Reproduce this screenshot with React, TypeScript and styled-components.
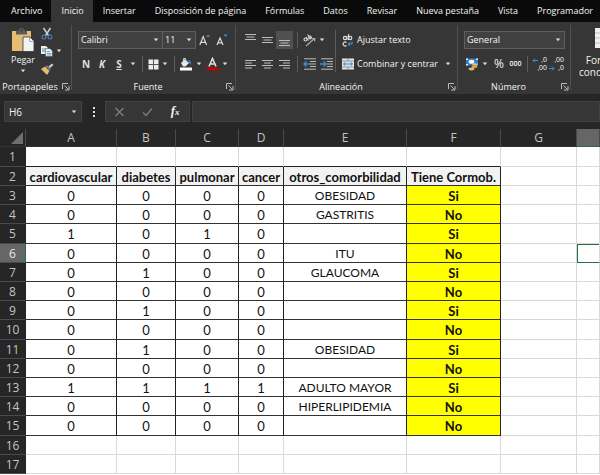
import React from "react";
import styled, { createGlobalStyle, css } from "styled-components";

const UI = '"Open Sans", "Noto Sans", sans-serif';
const SHEET = 'Lato, "Noto Sans", sans-serif';

const Global = createGlobalStyle`
  *, *::before, *::after { box-sizing: border-box; }
  body { margin: 0; background: #262626; font-family: ${UI}; overflow: hidden; }
  button, input, select { font: inherit; color: inherit; }
  button { border: 0; padding: 0; background: none; cursor: pointer; }
  svg { display: block; flex: none; }
`;

const Window = styled.div`
  display: flex;
  flex-direction: column;
  height: 100vh;
  overflow: hidden;
  color: #f4f4f4;
  font-size: 10px;
  line-height: 14px;
`;

/* ---------- ribbon tabs ---------- */

const TabBar = styled.nav`
  display: flex;
  flex: none;
  height: 22px;
  padding-left: 1px;
  background: #0a0a0a;
`;

const Tab = styled.button<{ $active?: boolean }>`
  flex: none;
  padding: 0 9px 0 10px;
  font-size: 9px;
  white-space: nowrap;
  background: ${(p) => (p.$active ? "#363636" : "transparent")};
`;

/* ---------- ribbon ---------- */

const Ribbon = styled.div`
  display: flex;
  flex: none;
  height: 72px;
  background: #363636;
  overflow: hidden;
`;

const Group = styled.section<{ $width: number }>`
  display: flex;
  flex-direction: column;
  flex: none;
  width: ${(p) => p.$width}px;
  padding: 6px 6px 0;
  position: relative;
  &::after {
    content: "";
    position: absolute;
    right: 0;
    top: 3px;
    bottom: 4px;
    width: 1px;
    background: #505050;
  }
`;

const GroupBody = styled.div`
  display: flex;
  flex: 1;
  min-height: 0;
`;

const GroupFooter = styled.div`
  display: flex;
  flex: none;
  align-items: center;
  height: 14px;
  margin: 0 -6px;
`;

const GroupLabel = styled.span`
  flex: 1;
  text-align: center;
  font-size: 9px;
`;

const Rows = styled.div`
  display: flex;
  flex-direction: column;
  gap: 4px;
  padding-top: 2px;
`;

const Row = styled.div`
  display: flex;
  align-items: center;
  height: 20px;
`;

const ToolButton = styled.button<{ $width: number; $active?: boolean }>`
  display: flex;
  align-items: center;
  justify-content: center;
  flex: none;
  width: ${(p) => p.$width}px;
  height: 18px;
  background: ${(p) => (p.$active ? "#505050" : "transparent")};
`;

const Glyph = styled.span<{ $style?: "bold" | "italic" | "underline" }>`
  font-weight: 700;
  color: #dedede;
  ${(p) => p.$style === "italic" && css`font-style: italic;`}
  ${(p) => p.$style === "underline" && css`text-decoration: underline;`}
`;

const Divider = styled.span<{ $width?: number }>`
  display: flex;
  flex: none;
  justify-content: center;
  width: ${(p) => p.$width ?? 8}px;
  height: 16px;
  &::before {
    content: "";
    width: 1px;
    background: #5c5c5c;
  }
`;

const TallDivider = styled.span`
  flex: none;
  width: 1px;
  height: 42px;
  margin: 2px 6px 0 0;
  background: #5c5c5c;
`;

const PickerFrame = styled.label<{ $width: number }>`
  display: flex;
  align-items: center;
  flex: none;
  position: relative;
  width: ${(p) => p.$width}px;
  height: 18px;
  border: 1px solid #5e5e5e;
  background: #414141;
  & + & { border-left: 0; }
  svg { position: absolute; right: 3px; pointer-events: none; }
`;

const PickerSelect = styled.select`
  appearance: none;
  width: 100%;
  height: 16px;
  padding: 0 12px 0 2px;
  border: 0;
  outline: 0;
  background: transparent;
  font-size: 9px;
`;

const LabelButton = styled.button`
  display: flex;
  align-items: center;
  gap: 3px;
  height: 20px;
  font-size: 9px;
  white-space: nowrap;
  svg:last-child:not(:first-child) { margin-left: 4px; }
`;

const PasteButton = styled.button`
  display: flex;
  flex-direction: column;
  align-items: center;
  width: 34px;
  font-size: 9px;
  span { margin: 1px 0 2px; }
`;

const ClipColumn = styled.div`
  display: flex;
  flex-direction: column;
  align-items: flex-start;
  margin-top: -4px;
`;

const ClipRow = styled.div`
  display: flex;
`;

const BigButton = styled.button`
  display: flex;
  flex-direction: column;
  align-items: center;
  flex: none;
  align-self: flex-start;
  padding: 6px 8px 0;
  font-size: 10px;
  line-height: 12px;
  span { margin-top: 6px; }
`;

/* ---------- formula bar ---------- */

const FormulaBar = styled.div`
  display: flex;
  flex: none;
  align-items: center;
  height: 35px;
  padding-left: 4px;
`;

const NameBox = styled.div`
  display: flex;
  align-items: center;
  width: 78px;
  height: 21px;
  border: 1px solid #414141;
  background: #363636;
`;

const NameInput = styled.input`
  flex: 1;
  min-width: 0;
  padding: 0 0 0 4px;
  border: 0;
  outline: 0;
  background: transparent;
`;

const FxGroup = styled.div`
  display: flex;
  align-items: center;
  justify-content: space-around;
  width: 85px;
  height: 21px;
  margin-right: 2px;
  border: 1px solid #414141;
  background: #363636;
`;

const FormulaInput = styled.input`
  flex: 1;
  min-width: 0;
  height: 21px;
  border: 1px solid #414141;
  outline: 0;
  background: #363636;
`;

/* ---------- sheet ---------- */

const SheetArea = styled.main`
  flex: 1;
  min-height: 0;
  overflow: hidden;
  background: #fff;
`;

const Sheet = styled.table`
  width: 100%;
  table-layout: fixed;
  border-collapse: separate;
  border-spacing: 0;
  font-family: ${SHEET};
  font-size: 12px;
  line-height: 16px;
  color: #111;
  th, td { padding: 1px 0 0; overflow: hidden; white-space: nowrap; text-align: center; }
`;

const Col = styled.col<{ $width?: number }>`
  width: ${(p) => (p.$width ? `${p.$width}px` : "auto")};
`;

const BodyRow = styled.tr`
  height: 19px;
  &:first-child, &:nth-child(5n) { height: 20px; }
`;

const ColumnHead = styled.th<{ $selected?: boolean }>`
  height: 18px;
  border-right: 1px solid #4a4a4a;
  border-bottom: 1px solid ${(p) => (p.$selected ? "#217346" : "#333")};
  background: ${(p) => (p.$selected ? "#666" : "#262626")};
  color: #c4c4c4;
  font-family: ${UI};
  font-size: 12px;
  font-weight: 400;
`;

const Corner = styled(ColumnHead)`
  svg { margin: 0 2px 0 auto; }
`;

const RowHead = styled.th<{ $selected?: boolean }>`
  border-bottom: 1px solid #4a4a4a;
  border-right: 1px solid ${(p) => (p.$selected ? "#217346" : "#262626")};
  background: ${(p) => (p.$selected ? "#666" : "#262626")};
  color: ${(p) => (p.$selected ? "#e6e6e6" : "#c4c4c4")};
  font-family: ${UI};
  font-size: 12px;
  font-weight: 400;
`;

type CellKind = "blank" | "above" | "title" | "number" | "value" | "flag" | "selected";

const Cell = styled.td<{ $kind: CellKind }>`
  border-right: 1px solid #d9d9d9;
  border-bottom: 1px solid #d9d9d9;
  ${(p) => p.$kind === "above" && css`border-bottom-color: #222;`}
  ${(p) =>
    ["title", "number", "value", "flag"].includes(p.$kind) &&
    css`border-right-color: #222; border-bottom-color: #333;`}
  ${(p) => p.$kind === "title" && css`background: #f2f2f2; font-size: 13px; font-weight: 700;`}
  ${(p) => p.$kind === "number" && css`font-size: 13px;`}
  ${(p) => p.$kind === "flag" && css`background: #ff0; font-size: 13px; font-weight: 700;`}
  ${(p) => p.$kind === "selected" && css`box-shadow: inset 1px 1px #217346; border-bottom-color: #217346;`}
`;

/* ---------- icons ---------- */

const Chevron = () => (
  <svg width="6" height="4" viewBox="0 0 6 4"><path d="M.8.5h4.4L3 3.2z" fill="#ddd" /></svg>
);

const Launcher = () => (
  <svg width="8" height="8" viewBox="0 0 8 8" fill="none" stroke="#bbb">
    <path d="M.5 6V.5H6M2.500 2.500l4 4M7 3v4H3" />
  </svg>
);

const PasteIcon = () => (
  <svg width="22" height="24" viewBox="0 0 22 24">
    <path d="M0 3h19v20H0z" fill="#e5bd72" />
    <path d="M4 2.500h3a2.500 2.500 0 0 1 5 0h3v4H4z" fill="#5b5b5b" />
    <circle cx="9.500" cy="2.500" r="1" fill="#363636" />
    <path d="M11 9h7l4 4v10.500H11z" fill="#f3f3f3" stroke="#363636" strokeWidth=".8" />
    <path d="M17.500 9v4.500H22" fill="none" stroke="#999" strokeWidth=".8" />
  </svg>
);

const CutIcon = () => (
  <svg width="12" height="13" viewBox="0 0 12 13" fill="none">
    <path d="M2.500 1l5 7.500M9.500 1l-5 7.500" stroke="#cfcfcf" strokeWidth="1.500" />
    <circle cx="3" cy="10" r="1.900" stroke="#3c7ab8" strokeWidth="1.200" />
    <circle cx="9" cy="10" r="1.900" stroke="#3c7ab8" strokeWidth="1.200" />
  </svg>
);

const CopyIcon = () => (
  <svg width="12" height="12" viewBox="0 0 12 12">
    <path d="M0 1h5l2 2v6H0z" fill="#ededed" />
    <path d="M1 4h3M1 6h3" stroke="#4a8fd0" />
    <path d="M4.500 3.500h4.500l2.500 2.500v5.500h-7z" fill="#ededed" stroke="#363636" strokeWidth=".5" />
    <path d="M6 6.500h3M6 8.500h4.500M6 10h4.500" stroke="#4a8fd0" strokeWidth=".8" />
  </svg>
);

const BrushIcon = () => (
  <svg width="13" height="12" viewBox="0 0 13 12">
    <path d="M0 6l4-2.500 4.500 4.500L6 12z" fill="#e5bd72" />
    <path d="M4.500 3.500L6 2l4 4-1.500 1.500z" fill="#777" />
    <path d="M7.500 3.500L11 .5 12.500 2 9 5z" fill="#d0d0d0" />
  </svg>
);

const FontSizeIcon = ({ down }: { down?: boolean }) => (
  <svg width="12" height="14" viewBox="0 0 12 14" fill="none">
    <path
      d={down ? "M1 12L4 5l3 7M2 9.800h4" : "M.8 12L4.200 3.500 7.600 12M2 9.300h4.500"}
      stroke="#d8d8d8"
      strokeWidth="1.200"
    />
    <path d={down ? "M7.500 1.500h4L9.500 4z" : "M7 4h4L9 1.500z"} fill="#3c8ddb" />
  </svg>
);

const BordersIcon = () => (
  <svg width="11" height="11" viewBox="0 0 11 11">
    <path d="M.5.5h10v10H.5z" fill="#ececec" />
    <path d="M5.500 0v11M0 5.500h11" stroke="#555" />
  </svg>
);

const FillIcon = () => (
  <svg width="14" height="14" viewBox="0 0 14 14">
    <path d="M2 6l4-4 4 4-3.500 3.500H4z" fill="#e8e8e8" />
    <path d="M4.500 4V1.500h2V5" fill="none" stroke="#ccc" />
    <path d="M9.500 3c2 0 2.500 1.500 2.500 5l-1.800-2z" fill="#3c8ddb" />
    <path d="M1 10.500h12v3H1z" fill="#fff" />
  </svg>
);

const FontColorIcon = () => (
  <svg width="13" height="14" viewBox="0 0 13 14">
    <path d="M3 9.500L6.500 1.500 10 9.500M4.300 7h4.400" fill="none" stroke="#e0e0e0" strokeWidth="1.600" />
    <path d="M.5 10.500h12v3H.5z" fill="#c80000" />
  </svg>
);

const lineSets: Record<string, string> = {
  top: "M0 1.500h11M1.500 4h8M0 6.500h11",
  middle: "M0 4.500h11M1.500 7h8M0 9.500h11",
  bottom: "M0 7.500h11M1.500 10h8M0 12.500h11",
  left: "M0 3.500h11M0 6h7M0 8.500h11M0 11h7",
  center: "M0 3.500h11M2 6h7M0 8.500h11M2 11h7",
  right: "M0 3.500h11M4 6h7M0 8.500h11M4 11h7",
};

const LinesIcon = ({ kind }: { kind: string }) => (
  <svg width="11" height="14" viewBox="0 0 11 14"><path d={lineSets[kind]} stroke="#bdbdbd" /></svg>
);

const OrientationIcon = () => (
  <svg width="13" height="13" viewBox="0 0 13 13" fill="none" stroke="#d5d5d5" strokeWidth="1.200">
    <circle cx="2.500" cy="5.500" r="1.500" />
    <path d="M3 3l2.500 3.500M4.500.5l3.500 4.500" />
    <circle cx="7" cy="3.500" r="1.300" />
    <path d="M3 12l8.500-7.500M8.500 4.500h3.200v3" stroke="#aaa" />
  </svg>
);

const IndentIcon = ({ out }: { out?: boolean }) => (
  <svg width="13" height="12" viewBox="0 0 13 12" fill="none">
    <path d="M1 .8h12M7 3.500h6M7 6h6M7 8.500h6M1 11.200h12" stroke="#bdbdbd" />
    <path d={out ? "M7 6H1M3.500 3.500L1 6l2.500 2.500" : "M0 6h6M3.500 3.500L6 6 3.500 8.500"} stroke="#3c8ddb" strokeWidth="1.400" />
  </svg>
);

const WrapIcon = () => (
  <svg width="12" height="13" viewBox="0 0 12 13" fill="none" stroke="#dcdcdc" strokeWidth="1.200">
    <circle cx="3" cy="4" r="1.600" />
    <path d="M4.800 2v4M6.500 0v6" />
    <circle cx="8.200" cy="4" r="1.600" />
    <path d="M4.500 8.500a2 2 0 1 0 0 3" />
    <path d="M10 7.500v2.500H6.500M8 8.300L6.300 10 8 11.700" stroke="#3c8ddb" />
  </svg>
);

const MergeIcon = () => (
  <svg width="12" height="12" viewBox="0 0 12 12">
    <path d="M0 .5h12v11H0z" fill="#e8e8e8" />
    <path d="M0 3h12M0 9h12M6 .5V3M6 9v2.500" stroke="#777" strokeWidth=".8" />
    <path d="M1.500 6h9M3.300 4.200L1.500 6l1.800 1.800M8.700 4.200L10.500 6 8.700 7.800" fill="none" stroke="#2b7cd0" />
  </svg>
);

const CurrencyIcon = () => (
  <svg width="14" height="13" viewBox="0 0 14 13">
    <path d="M1 .5h12v7H1z" fill="#2f7fd0" />
    <ellipse cx="6.500" cy="3.800" rx="2.800" ry="2" fill="#fff" />
    <path d="M1 .5h2v1.500H1zM1 6h2v1.500H1zM11 .5h2v1.500h-2z" fill="#dceafa" />
    <ellipse cx="10" cy="6.500" rx="3" ry="1.300" fill="#e5bd72" />
    <ellipse cx="9.500" cy="8.800" rx="3" ry="1.200" fill="#d8a850" />
    <ellipse cx="6.500" cy="11" rx="3" ry="1.400" fill="#e5bd72" />
  </svg>
);

const PercentText = styled.span`
  font-size: 12px;
`;

const SmallText = styled.span`
  font-size: 7px;
  font-weight: 600;
`;

const DecimalFrame = styled.span`
  display: grid;
  grid-template-columns: 5px auto;
  align-items: center;
  font-family: "Liberation Sans", sans-serif;
  font-size: 7px;
  line-height: 8px;
  text-align: right;
`;

const Arrow = ({ right }: { right?: boolean }) => (
  <svg width="6" height="5" viewBox="0 0 6 5" fill="none" stroke="#3c8ddb">
    <path d={right ? "M0 2.500h5M3 .5l2 2-2 2" : "M6 2.500H1M3 .5l-2 2 2 2"} />
  </svg>
);

const TableIcon = () => (
  <svg width="22" height="20" viewBox="0 0 22 20">
    <path d="M0 0h22v20H0z" fill="#f0f0f0" />
    <path d="M0 5h22M0 10h22M0 15h22M7 0v20M14 0v20" stroke="#b0b0b0" strokeWidth=".8" />
  </svg>
);

const MarkIcon = ({ check }: { check?: boolean }) => (
  <svg width="11" height="10" viewBox="0 0 11 10" fill="none" stroke="#7d7d7d" strokeWidth="1.400">
    <path d={check ? "M1 5.500L4 8.500 10 1.500" : "M1.500 1l8 8M9.500 1l-8 8"} />
  </svg>
);

const DotsIcon = () => (
  <svg width="12" height="10" viewBox="0 0 12 10" fill="#ddd">
    <path d="M5 0h2v2H5zM5 4h2v2H5zM5 8h2v2H5z" />
  </svg>
);

const FxLabel = styled.span`
  font-family: "Liberation Serif", serif;
  font-size: 13px;
  font-style: italic;
  font-weight: 700;
  small { font-size: 9px; }
`;

const DotsSlot = styled.span`
  display: flex;
  justify-content: center;
  width: 23px;
`;

/* ---------- data ---------- */

const tabs = ["Archivo", "Inicio", "Insertar", "Disposición de página", "Fórmulas", "Datos", "Revisar", "Nueva pestaña", "Vista", "Programador"];
const letters = ["A", "B", "C", "D", "E", "F", "G", "H"];
const widths = [26, 91, 59, 63, 45, 123, 94, 76];
const rows: string[][] = [
  [],
  ["cardiovascular", "diabetes", "pulmonar", "cancer", "otros_comorbilidad", "Tiene Cormob."],
  ["0", "0", "0", "0", "OBESIDAD", "Si"],
  ["0", "0", "0", "0", "GASTRITIS", "No"],
  ["1", "0", "1", "0", "", "Si"],
  ["0", "0", "0", "0", "ITU", "No"],
  ["0", "1", "0", "0", "GLAUCOMA", "Si"],
  ["0", "0", "0", "0", "", "No"],
  ["0", "1", "0", "0", "", "Si"],
  ["0", "0", "0", "0", "", "No"],
  ["0", "1", "0", "0", "OBESIDAD", "Si"],
  ["0", "0", "0", "0", "", "No"],
  ["1", "1", "1", "1", "ADULTO MAYOR", "Si"],
  ["0", "0", "0", "0", "HIPERLIPIDEMIA", "No"],
  ["0", "0", "0", "0", "", "No"],
  [],
  [],
];

const kindOf = (row: number, col: number): CellKind => {
  if (row === 5 && col === 7) return "selected";
  if (col > 5 || row > 14) return "blank";
  if (row === 0) return "above";
  if (row === 1) return "title";
  if (col < 4) return "number";
  return col === 5 ? "flag" : "value";
};

const Picker = ({ label, value, width }: { label: string; value: string; width: number }) => (
  <PickerFrame $width={width}>
    <PickerSelect aria-label={label} defaultValue={value}>
      <option>{value}</option>
    </PickerSelect>
    <Chevron />
  </PickerFrame>
);

const Footer = ({ label }: { label: string }) => (
  <GroupFooter>
    <GroupLabel>{label}</GroupLabel>
    <ToolButton $width={12} aria-label={`Opciones de ${label}`}><Launcher /></ToolButton>
  </GroupFooter>
);

const Drop = ({ label, width = 10 }: { label: string; width?: number }) => (
  <ToolButton $width={width} aria-label={label}><Chevron /></ToolButton>
);

export default function App() {
  return (
    <Window>
      <Global />
      <TabBar>
        {tabs.map((t) => <Tab key={t} $active={t === "Inicio"}>{t}</Tab>)}
      </TabBar>
      <Ribbon>
        <Group $width={72}>
          <GroupBody>
            <PasteButton><PasteIcon /><span>Pegar</span><Chevron /></PasteButton>
            <ClipColumn>
              <ToolButton $width={14} aria-label="Cortar"><CutIcon /></ToolButton>
              <ClipRow>
                <ToolButton $width={14} aria-label="Copiar"><CopyIcon /></ToolButton>
                <Drop label="Opciones de copia" />
              </ClipRow>
              <ToolButton $width={14} aria-label="Copiar formato"><BrushIcon /></ToolButton>
            </ClipColumn>
          </GroupBody>
          <Footer label="Portapapeles" />
        </Group>

        <Group $width={164}>
          <GroupBody>
            <Rows>
              <Row>
                <Picker label="Fuente" value="Calibri" width={85} />
                <Picker label="Tamaño de fuente" value="11" width={33} />
                <ToolButton $width={18} aria-label="Aumentar tamaño"><FontSizeIcon /></ToolButton>
                <ToolButton $width={16} aria-label="Disminuir tamaño"><FontSizeIcon down /></ToolButton>
              </Row>
              <Row>
                <ToolButton $width={16} aria-label="Negrita"><Glyph>N</Glyph></ToolButton>
                <ToolButton $width={16} aria-label="Cursiva"><Glyph $style="italic">K</Glyph></ToolButton>
                <ToolButton $width={18} aria-label="Subrayado"><Glyph $style="underline">S</Glyph></ToolButton>
                <Drop label="Opciones de subrayado" />
                <Divider />
                <ToolButton $width={14} aria-label="Bordes"><BordersIcon /></ToolButton>
                <Drop label="Opciones de bordes" />
                <Divider />
                <ToolButton $width={16} aria-label="Color de relleno"><FillIcon /></ToolButton>
                <Drop label="Colores de relleno" />
                <ToolButton $width={16} aria-label="Color de fuente"><FontColorIcon /></ToolButton>
                <Drop label="Colores de fuente" />
              </Row>
            </Rows>
          </GroupBody>
          <Footer label="Fuente" />
        </Group>

        <Group $width={222}>
          <GroupBody>
            <Rows>
              <Row>
                <ToolButton $width={17} aria-label="Alinear arriba"><LinesIcon kind="top" /></ToolButton>
                <ToolButton $width={17} aria-label="Alinear en el medio"><LinesIcon kind="middle" /></ToolButton>
                <ToolButton $width={17} $active aria-label="Alinear abajo"><LinesIcon kind="bottom" /></ToolButton>
                <Divider />
                <ToolButton $width={17} aria-label="Orientación"><OrientationIcon /></ToolButton>
                <Drop label="Opciones de orientación" width={8} />
              </Row>
              <Row>
                <ToolButton $width={17} aria-label="Alinear a la izquierda"><LinesIcon kind="left" /></ToolButton>
                <ToolButton $width={17} aria-label="Centrar"><LinesIcon kind="center" /></ToolButton>
                <ToolButton $width={17} aria-label="Alinear a la derecha"><LinesIcon kind="right" /></ToolButton>
                <Divider />
                <ToolButton $width={17} aria-label="Disminuir sangría"><IndentIcon out /></ToolButton>
                <ToolButton $width={17} aria-label="Aumentar sangría"><IndentIcon /></ToolButton>
              </Row>
            </Rows>
            <TallDivider />
            <Rows>
              <LabelButton><WrapIcon />Ajustar texto</LabelButton>
              <LabelButton><MergeIcon />Combinar y centrar<Chevron /></LabelButton>
            </Rows>
          </GroupBody>
          <Footer label="Alineación" />
        </Group>

        <Group $width={113}>
          <GroupBody>
            <Rows>
              <Row><Picker label="Formato de número" value="General" width={101} /></Row>
              <Row>
                <ToolButton $width={16} aria-label="Formato de contabilidad"><CurrencyIcon /></ToolButton>
                <Drop label="Monedas" />
                <ToolButton $width={18} aria-label="Porcentaje"><PercentText>%</PercentText></ToolButton>
                <ToolButton $width={15} aria-label="Estilo millares"><SmallText>000</SmallText></ToolButton>
                <Divider />
                <ToolButton $width={17} aria-label="Aumentar decimales">
                  <DecimalFrame><Arrow /><span>,0</span><i /><span>,00</span></DecimalFrame>
                </ToolButton>
                <ToolButton $width={17} aria-label="Disminuir decimales">
                  <DecimalFrame><i /><span>,00</span><Arrow right /><span>,0</span></DecimalFrame>
                </ToolButton>
              </Row>
            </Rows>
          </GroupBody>
          <Footer label="Número" />
        </Group>

        <BigButton><TableIcon /><span>Formato<br />condicional</span></BigButton>
      </Ribbon>

      <FormulaBar>
        <NameBox>
          <NameInput aria-label="Cuadro de nombres" defaultValue="H6" />
          <Drop label="Nombres definidos" width={14} />
        </NameBox>
        <DotsSlot><DotsIcon /></DotsSlot>
        <FxGroup>
          <ToolButton $width={22} aria-label="Cancelar"><MarkIcon /></ToolButton>
          <ToolButton $width={22} aria-label="Introducir"><MarkIcon check /></ToolButton>
          <ToolButton $width={22} aria-label="Insertar función"><FxLabel>f<small>x</small></FxLabel></ToolButton>
        </FxGroup>
        <FormulaInput aria-label="Barra de fórmulas" />
      </FormulaBar>

      <SheetArea>
        <Sheet>
          <colgroup>
            {widths.map((w, i) => <Col key={i} $width={w} />)}
            <Col />
          </colgroup>
          <thead>
            <tr>
              <Corner aria-label="Seleccionar todo">
                <svg width="12" height="12" viewBox="0 0 12 12"><path d="M12 0v12H0z" fill="#6e6e6e" /></svg>
              </Corner>
              {letters.map((l) => <ColumnHead key={l} scope="col" $selected={l === "H"}>{l === "H" ? "" : l}</ColumnHead>)}
            </tr>
          </thead>
          <tbody>
            {rows.map((cells, r) => (
              <BodyRow key={r}>
                <RowHead scope="row" $selected={r === 5}>{r + 1}</RowHead>
                {letters.map((l, c) => <Cell key={l} $kind={kindOf(r, c)}>{cells[c]}</Cell>)}
              </BodyRow>
            ))}
          </tbody>
        </Sheet>
      </SheetArea>
    </Window>
  );
}
